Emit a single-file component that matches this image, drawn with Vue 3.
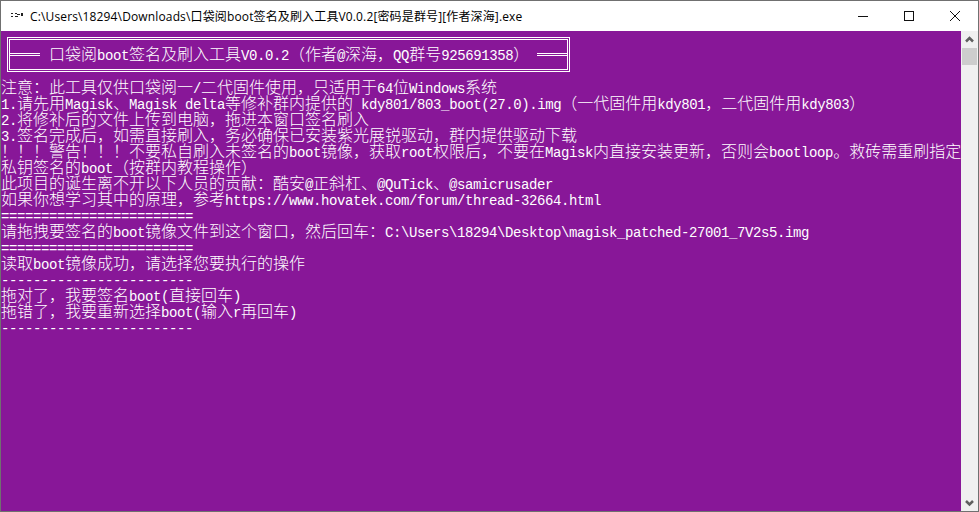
<script setup>
const lines = [
  '注意：此工具仅供口袋阅一/二代固件使用，只适用于64位Windows系统',
  '1.请先用Magisk、Magisk delta等修补群内提供的 kdy801/803_boot(27.0).img（一代固件用kdy801，二代固件用kdy803）',
  '2.将修补后的文件上传到电脑，拖进本窗口签名刷入',
  '3.签名完成后，如需直接刷入，务必确保已安装紫光展锐驱动，群内提供驱动下载',
  '！！！警告！！！不要私自刷入未签名的boot镜像，获取root权限后，不要在Magisk内直接安装更新，否则会bootloop。救砖需重刷指定',
  '私钥签名的boot（按群内教程操作）',
  '此项目的诞生离不开以下人员的贡献：酷安@正斜杠、@QuTick、@samicrusader',
  '如果你想学习其中的原理，参考https://www.hovatek.com/forum/thread-32664.html',
  '========================',
  '请拖拽要签名的boot镜像文件到这个窗口，然后回车：C:\\Users\\18294\\Desktop\\magisk_patched-27001_7V2s5.img',
  '========================',
  '读取boot镜像成功，请选择您要执行的操作',
  '------------------------',
  '拖对了，我要签名boot(直接回车)',
  '拖错了，我要重新选择boot(输入r再回车)',
  '------------------------',
]

function runs(text) {
  return (text.match(/[\x20-\x7e]+|[^\x20-\x7e]+/g) || []).map((t) => ({
    t,
    half: /^[\x20-\x7e]/.test(t),
  }))
}

const rows = lines.map(runs)
const titleRuns = runs('口袋阅boot签名及刷入工具V0.0.2（作者@深海，QQ群号925691358）')
</script>

<template>
  <div class="win">
    <header class="bar">
      <svg class="icon" width="16" height="16" viewBox="0 0 16 16">
        <path d="M2 5h2v1H2zM2 8h2v1H2zM6 5h2v1H6zM8 6h3v1H8zM12 5h2v3h-2zM6 8h3v1H6z" fill="#222" />
      </svg>
      <span class="title">C:\Users\18294\Downloads\口袋阅boot签名及刷入工具V0.0.2[密码是群号][作者深海].exe</span>
      <div class="ctrl">
        <svg width="12" height="12" viewBox="0 0 12 12"><path d="M1 6.5h10" stroke="#111" fill="none" /></svg>
      </div>
      <div class="ctrl">
        <svg width="12" height="12" viewBox="0 0 12 12"><rect x="1.5" y="1.5" width="9" height="9" stroke="#111" fill="none" /></svg>
      </div>
      <div class="ctrl">
        <svg width="12" height="12" viewBox="0 0 12 12"><path d="M1 1l10 10M11 1L1 11" stroke="#111" fill="none" /></svg>
      </div>
    </header>
    <div class="body">
      <main class="console">
        <div class="box">
          <div class="box-inner">
            <i class="dbl dbl-left"></i>
            <span class="row title-row">
              <span v-for="(r, j) in titleRuns" :key="j" :class="r.half ? 'h' : 'f'">{{ r.t }}</span>
            </span>
            <i class="dbl dbl-right"></i>
          </div>
        </div>
        <div v-for="(row, i) in rows" :key="i" class="row">
          <span v-for="(r, j) in row" :key="j" :class="r.half ? 'h' : 'f'">{{ r.t }}</span>
        </div>
      </main>
      <aside class="scroll">
        <svg class="arrow" width="17" height="17" viewBox="0 0 17 17"><path d="M5 10.5l3.5-3.5 3.5 3.5" stroke="#606060" stroke-width="2.5" fill="none" /></svg>
        <div class="thumb"></div>
        <div class="track"></div>
        <svg class="arrow" width="17" height="17" viewBox="0 0 17 17"><path d="M5 7l3.5 3.5L12 7" stroke="#606060" stroke-width="2.5" fill="none" /></svg>
      </aside>
    </div>
  </div>
</template>

<style>
html, body { margin: 0; background: #fff; }
</style>

<style scoped>
.win {
  width: 979px;
  height: 512px;
  box-sizing: border-box;
  border: 1px solid #707070;
  display: flex;
  flex-direction: column;
  overflow: hidden;
  background: #fff;
}
.bar {
  height: 30px;
  flex: none;
  display: flex;
  align-items: center;
  background: #fff;
}
.icon { margin-left: 8px; flex: none; }
.title {
  flex: 1;
  margin-left: 5px;
  font: 12px "Open Sans", "Noto Sans CJK SC", sans-serif;
  letter-spacing: 0.14px;
  color: #000;
  white-space: nowrap;
}
.ctrl {
  width: 46px;
  height: 30px;
  display: flex;
  align-items: center;
  justify-content: center;
}
.body { flex: 1; display: flex; min-height: 0; }
.console {
  flex: 1;
  background: #881798;
  color: #fff;
  padding-top: 1px;
  overflow: hidden;
  font: 16px/12px "Noto Sans CJK SC", sans-serif;
}
.row {
  display: block;
  height: 16px;
  white-space: pre;
}
.h {
  font: 14px/12px "Liberation Mono", monospace;
  letter-spacing: -0.4px;
}
.f { font: 300 16px/12px "Noto Sans CJK SC", sans-serif; }
.box { height: 48px; padding: 5px 0 0 6px; box-sizing: border-box; }
.box-inner {
  width: 563px;
  height: 35px;
  box-sizing: border-box;
  border: 3px double #fff;
  display: flex;
  align-items: center;
  gap: 9px;
}
.dbl {
  height: 1px;
  border-top: 1px solid #fff;
  border-bottom: 1px solid #fff;
}
.dbl-left { flex: none; width: 30px; }
.dbl-right { flex: 1; }
.title-row { flex: none; margin-right: -1px; }
.scroll {
  width: 17px;
  flex: none;
  display: flex;
  flex-direction: column;
  background: #f0f0f0;
}
.arrow { flex: none; }
.thumb { height: 17px; margin: 0 1px; background: #cdcdcd; flex: none; }
.track { flex: 1; }
</style>
